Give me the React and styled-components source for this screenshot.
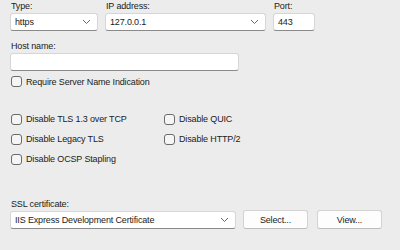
import React from 'react'
import styled, { createGlobalStyle } from 'styled-components'

const Global = createGlobalStyle`
  html, body {
    margin: 0;
    padding: 0;
    background: #ececec;
  }
  body {
    width: 400px;
    height: 250px;
    overflow: hidden;
    font-family: "Liberation Sans", Arial, sans-serif;
    font-size: 9px;
    letter-spacing: -0.15px;
    color: #1b1b1b;
  }
`

const Page = styled.div`
  padding: 0 0 0 10px;
`

const Row = styled.div`
  display: flex;
  gap: ${({ gap }) => gap || 7}px;
  align-items: flex-end;
  margin-top: ${({ top }) => top || 0}px;
`

const Field = styled.div`
  display: flex;
  flex-direction: column;
  width: ${({ w }) => w}px;
  margin-top: ${({ top }) => top || 0}px;
`

const Label = styled.div`
  height: 12px;
  line-height: 12px;
  margin-bottom: 1px;
  padding-left: 1px;
`

const Box = styled.div`
  box-sizing: border-box;
  height: 18px;
  background: #fff;
  border: 1px solid #d6d6d6;
  border-bottom-color: #8a8a8a;
  border-radius: 3px;
  display: flex;
  align-items: center;
  padding: 0 6px 0 4px;
  justify-content: space-between;
`

const Chevron = () => (
  <svg width="9" height="6" viewBox="0 0 9 6">
    <path d="M1 1 L4.5 4.5 L8 1" fill="none" stroke="#6a6a6a" strokeWidth="1" />
  </svg>
)

const Check = styled.label`
  display: flex;
  align-items: center;
  gap: 4px;
  height: ${({ h }) => h || 20}px;
`

const CheckBox = styled.span`
  box-sizing: border-box;
  width: 11px;
  height: 11px;
  margin-left: 1px;
  border: 1px solid #6b6b6b;
  border-radius: 3px;
  background: #f5f5f5;
`

const Single = styled.div`
  margin-top: 1px;
`

const Grid = styled.div`
  display: grid;
  grid-template-columns: 153px auto;
  margin-top: 18px;
`

const Button = styled.div`
  box-sizing: border-box;
  width: 65px;
  height: 19px;
  margin-left: ${({ left }) => left || 0}px;
  background: #fdfdfd;
  border: 1px solid #d3d3d3;
  border-bottom-color: #bdbdbd;
  border-radius: 3px;
  display: flex;
  align-items: center;
  justify-content: center;
`

const Option = ({ children, h }) => (
  <Check h={h}>
    <CheckBox />
    {children}
  </Check>
)

export default function App() {
  return (
    <>
      <Global />
      <Page>
        <Row gap={7}>
          <Field w={88}>
            <Label>Type:</Label>
            <Box>https<Chevron /></Box>
          </Field>
          <Field w={161}>
            <Label>IP address:</Label>
            <Box>127.0.0.1<Chevron /></Box>
          </Field>
          <Field w={42}>
            <Label>Port:</Label>
            <Box>443</Box>
          </Field>
        </Row>
        <Field w={229} top={9}>
          <Label>Host name:</Label>
          <Box />
        </Field>
        <Single>
          <Option h={19}>Require Server Name Indication</Option>
        </Single>
        <Grid>
          <Option>Disable TLS 1.3 over TCP</Option>
          <Option>Disable QUIC</Option>
          <Option>Disable Legacy TLS</Option>
          <Option>Disable HTTP/2</Option>
          <Option>Disable OCSP Stapling</Option>
        </Grid>
        <Row gap={7} top={29}>
          <Field w={226}>
            <Label>SSL certificate:</Label>
            <Box>IIS Express Development Certificate<Chevron /></Box>
          </Field>
          <Button>Select...</Button>
          <Button left={2}>View...</Button>
        </Row>
      </Page>
    </>
  )
}
